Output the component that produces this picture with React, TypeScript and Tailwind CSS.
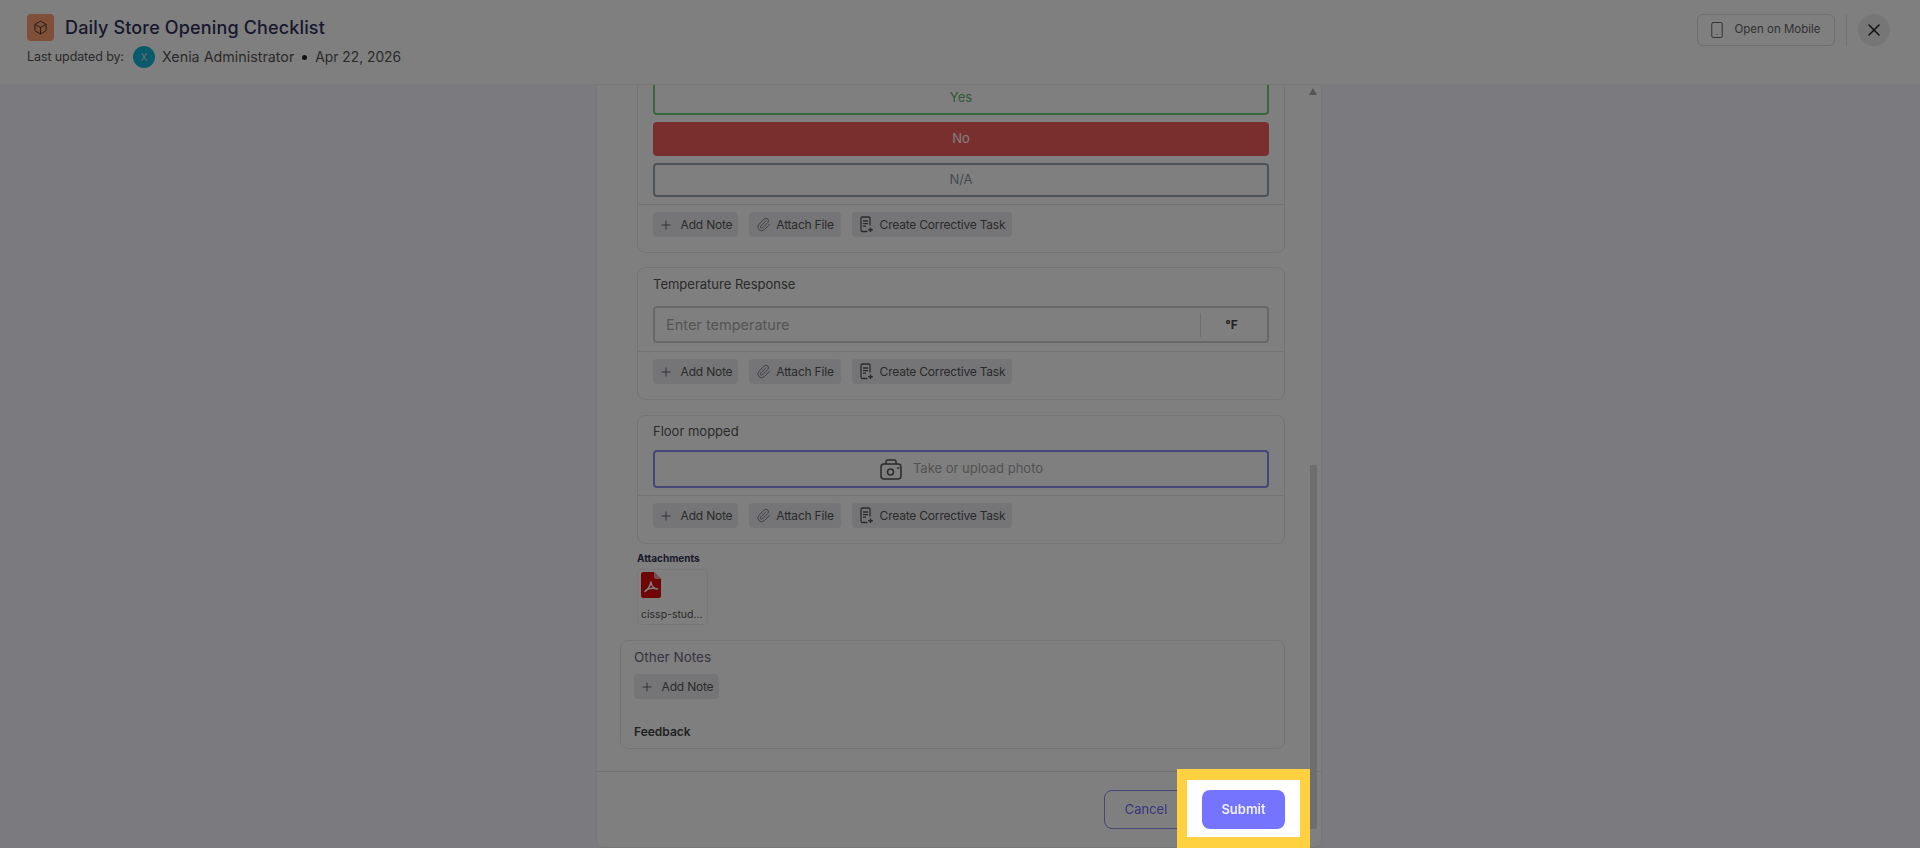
import { Box, Paperclip, Plus, Smartphone, X } from "lucide-react";

const FONT = { fontFamily: "Inter, 'Noto Sans', sans-serif" };

function TaskIcon() {
  return (
    <svg width="16" height="19" viewBox="0 0 16 19" fill="none" stroke="currentColor" strokeWidth="1.3">
      <path d="M8 16.5H3.5A1.5 1.5 0 0 1 2 15V3.5A1.5 1.5 0 0 1 3.5 2h6A1.5 1.5 0 0 1 11 3.5V10" strokeLinecap="round" />
      <path d="M4.5 6h4M4.5 8.6h4M4.5 11.2h2" strokeLinecap="round" />
      <path d="M11.5 12.5v4.6M9.2 14.8h4.6" strokeWidth="1.4" />
    </svg>
  );
}

function CameraIcon() {
  return (
    <svg width="24" height="22" viewBox="0 0 24 22" fill="none" stroke="currentColor" strokeWidth="1.5">
      <rect x="2" y="6" width="20" height="15" rx="3" />
      <path d="M7 6V3.5A1.5 1.5 0 0 1 8.500 2h7A1.500 1.500 0 0 1 17 3.500V6" />
      <circle cx="11.500" cy="14" r="3" />
      <path d="M18.500 10h1.500" strokeLinecap="round" />
    </svg>
  );
}

function PdfIcon() {
  return (
    <svg width="20" height="26" viewBox="0 0 20 26">
      <path d="M2.500 0H13l7 7v16.500A2.500 2.500 0 0 1 17.500 26h-15A2.500 2.500 0 0 1 0 23.500v-21A2.500 2.500 0 0 1 2.500 0Z" fill="#e00a0a" />
      <path d="M13 0l7 7h-5a2 2 0 0 1-2-2Z" fill="#f59a9a" />
      <path d="M10 10c-.6 3 -2 6.500 -6 9.500M10 10c.5 3.500 2.500 6.500 6.500 7M4.500 18.300c3.500-2 7.500-2.500 12-1.300" fill="none" stroke="#fff" strokeWidth="1.500" strokeLinecap="round" />
    </svg>
  );
}

function ActionButton({ icon, label, width }: { icon: React.ReactNode; label: string; width: string }) {
  return (
    <button className={`flex h-[25px] items-center justify-center gap-[5px] rounded bg-[#ebebee] text-[12px] leading-none text-[#555] tracking-[-0.2px] ${width}`}>
      {icon}
      {label}
    </button>
  );
}

function Actions() {
  return (
    <div className="flex gap-[11px] border-t border-[#e6e6e6] px-[15px] pt-[7px]">
      <ActionButton icon={<Plus size={14} strokeWidth={1.5} className="mr-[3px] text-[#555]" />} label="Add Note" width="w-[85px]" />
      <ActionButton icon={<Paperclip size={15} strokeWidth={1.5} className="text-[#777]" />} label="Attach File" width="w-[92px]" />
      <ActionButton icon={<TaskIcon />} label="Create Corrective Task" width="w-[160px]" />
    </div>
  );
}

function ChoiceButton({ label, className }: { label: string; className: string }) {
  return (
    <button className={`flex h-[34px] w-full items-center justify-center rounded text-[13px] ${className}`}>
      {label}
    </button>
  );
}

function Card({ children, className }: { children: React.ReactNode; className: string }) {
  return <div className={`ml-[17px] rounded-lg border border-[#e8e8e8] bg-white ${className}`}>{children}</div>;
}

export default function App() {
  return (
    <div style={FONT} className="relative h-[848px] w-[1920px] overflow-hidden bg-[#f5f5ff]">
      <div className="flex h-full flex-col blur-[0.5px]">
        {/* header */}
        <header className="flex h-[84px] shrink-0 items-start justify-between bg-white pl-[27px] pr-[30px] pt-[14px]">
          <div>
            <div className="flex h-[27px] items-center gap-[11px]">
              <div className="flex size-[27px] items-center justify-center rounded bg-[#ff9f70]">
                <Box size={15} strokeWidth={1.5} className="text-[#333]" />
              </div>
              <span className="text-[18px] font-medium tracking-[0.15px] text-[#30305a]">Daily Store Opening Checklist</span>
            </div>
            <div className="mt-[5px] flex items-center">
              <span className="w-[106px] text-[12.500px] tracking-[-0.1px] text-[#555]">Last updated by:</span>
              <span className="flex size-[22px] items-center justify-center rounded-full bg-[#12b5d6] text-[10px] text-[#ddd]">X</span>
              <span className="ml-[7px] text-[14.300px] text-[#555]">Xenia Administrator</span>
              <span className="ml-[8px] size-[5px] rounded-full bg-[#222]" />
              <span className="ml-[8px] text-[13.800px] text-[#555]">Apr 22, 2026</span>
            </div>
          </div>
          <div className="flex items-center">
            <button className="flex h-[32px] w-[138px] items-center justify-center gap-[8px] rounded-md border border-[#dcdcdc] pr-[3px] text-[11.500px] text-[#666]">
              <Smartphone size={18} strokeWidth={1.3} className="text-[#666]" />
              Open on Mobile
            </button>
            <div className="mx-[11px] h-[32px] w-px bg-[#e2e2e2]" />
            <button className="flex size-[32px] items-center justify-center rounded-full bg-[#ececec]">
              <X size={20} strokeWidth={1.800} className="text-[#222]" />
            </button>
          </div>
        </header>

        {/* panel */}
        <main className="relative ml-[596px] flex min-h-0 w-[726px] flex-1 flex-col rounded-b-lg border border-[#ececec] bg-white">
          <div className="flex min-h-0 flex-1 flex-col justify-end overflow-hidden pb-[22px] pl-[23px] pr-[36px]">
            <Card className="shrink-0 pb-[15px]">
              <div className="flex flex-col gap-[7px] px-[15px] pb-[7px]">
                <ChoiceButton label="Yes" className="border-2 border-[#6fcf78] text-[#5cb868]" />
                <ChoiceButton label="No" className="bg-[#f45e5e] text-white" />
                <ChoiceButton label="N/A" className="border-2 border-[#97a6b2] text-[#8a95a0]" />
              </div>
              <Actions />
            </Card>

            <Card className="mt-[14px] shrink-0 pb-[15px] pt-[6px]">
              <div className="px-[15px] text-[13px] leading-[20px] text-[#555]">Temperature Response</div>
              <div className="mx-[15px] mt-[12px] flex h-[37px] items-center rounded border-2 border-[#d0d0d0] pl-[11px]">
                <span className="flex-1 text-[14.500px] text-[#aaa]">Enter temperature</span>
                <span className="flex h-[24px] w-[67px] items-center justify-center border-l border-[#dedede] pr-[5px] text-[12px] font-bold text-[#444]">°F</span>
              </div>
              <div className="mt-2">
                <Actions />
              </div>
            </Card>

            <Card className="mt-[15px] shrink-0 pb-[15px] pt-[5px]">
              <div className="px-[15px] text-[13px] leading-[20px] text-[#555]">Floor mopped</div>
              <div className="mx-[15px] mt-[9px] flex h-[38px] items-center justify-center gap-[10px] rounded border-2 border-[#8c8cf2] text-[13px] text-[#a5a5a5]">
                <span className="text-[#555]"><CameraIcon /></span>
                Take or upload photo
              </div>
              <div className="mt-[7px]">
                <Actions />
              </div>
            </Card>

            <div className="ml-[17px] mt-[8px] shrink-0 text-[10px] font-bold leading-[12px] text-[#33335a]">Attachments</div>
            <div className="ml-[17px] mt-[5px] flex h-[56px] w-[71px] shrink-0 flex-col rounded border border-[#f0f0f0] pl-[3px] pt-[2px]">
              <PdfIcon />
              <span className="mt-[10px] text-[10.500px] leading-[14px] text-[#555]">cissp-stud...</span>
            </div>

            <div className="mt-[15px] flex h-[109px] shrink-0 flex-col rounded-lg border border-[#e8e8e8] bg-white px-[13px] pt-[6px]">
              <span className="text-[13.500px] leading-[20px] text-[#6a6a80]">Other Notes</span>
              <button className="mt-[7px] flex h-[25px] w-[85px] items-center justify-center gap-[5px] rounded bg-[#ebebee] text-[12px] tracking-[-0.2px] text-[#555]">
                <Plus size={14} strokeWidth={1.500} className="mr-[3px] text-[#555]" />
                Add Note
              </button>
              <span className="mt-[25px] text-[12px] font-semibold leading-[16px] text-[#444]">Feedback</span>
            </div>
          </div>

          {/* footer */}
          <footer className="flex h-[76px] shrink-0 items-start justify-end border-t border-[#e6e6e6] pr-[131px] pt-[18px]">
            <button className="h-[39px] w-[86px] rounded-lg border border-[#8a8af0] pr-[2px] text-[13px] text-[#6868fe]">Cancel</button>
          </footer>

          {/* scrollbar */}
          <div className="absolute right-[4px] top-[3px] h-0 w-0 border-x-[4.500px] border-b-[7px] border-x-transparent border-b-[#aaa]" />
          <div className="absolute bottom-[18px] right-[4px] top-[380px] w-[7px] bg-[#dcdcdc]" />
        </main>
      </div>

      {/* dim overlay */}
      <div className="absolute inset-0 bg-black/50" />

      {/* highlighted step */}
      <div className="absolute left-[1177px] top-[769px] flex h-[79px] w-[133px] items-start justify-center border-x-[10px] border-b-[11px] border-t-[11px] border-[#ffd040] bg-white pt-[10px]">
        <button className="h-[39px] w-[83px] rounded-lg bg-[#7474fe] text-[13px] font-semibold text-[#f0f0ff] blur-[0.3px]">Submit</button>
      </div>
    </div>
  );
}
